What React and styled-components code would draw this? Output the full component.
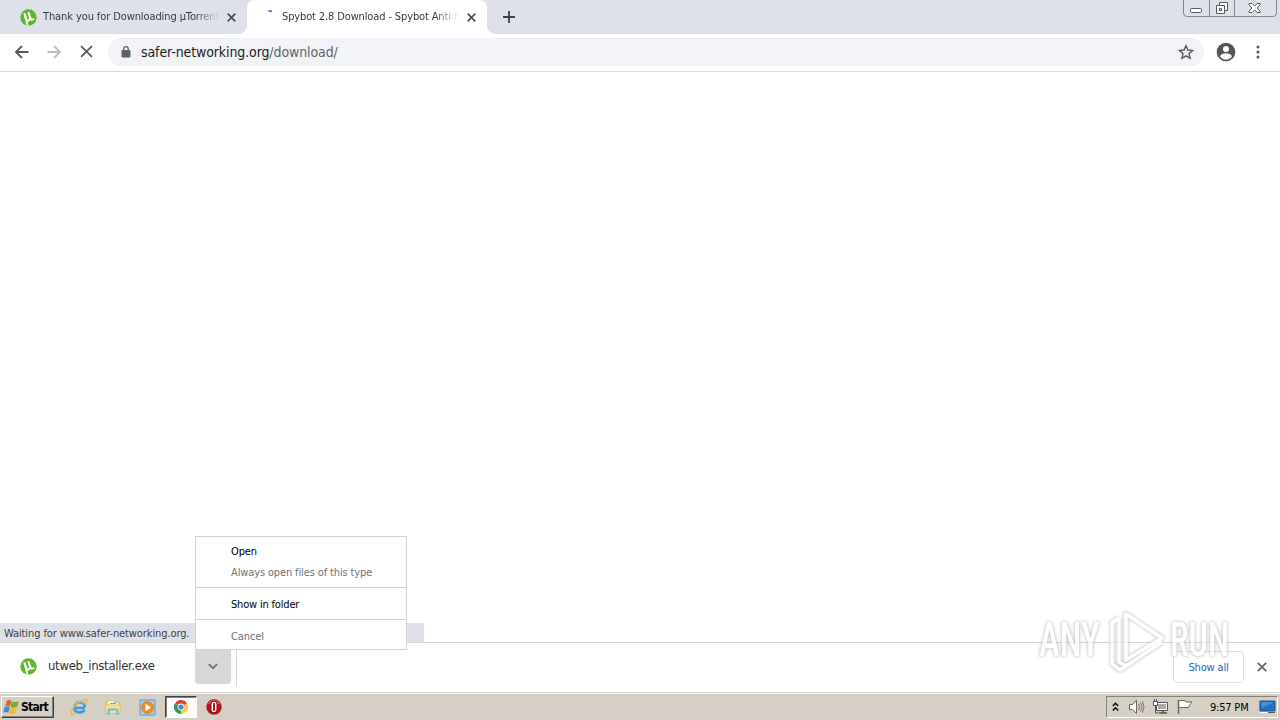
import React from 'react';
import styled, { createGlobalStyle, css } from 'styled-components';

const Global = createGlobalStyle`
  * { box-sizing: border-box; }
  html, body { margin: 0; padding: 0; overflow: hidden; }
  body { font-family: "DejaVu Sans Condensed", "DejaVu Sans", sans-serif; font-stretch: condensed; font-size: 11px; color: #202124; }
  svg { display: block; flex: none; }
`;

const Screen = styled.div`
  position: relative;
  width: 1280px;
  height: 720px;
  display: flex;
  flex-direction: column;
  overflow: hidden;
  background: #fff;
`;

const Label = styled.span`
  display: block;
  white-space: pre;
  font-size: ${(p) => p.$size || 11}px;
  letter-spacing: ${(p) => p.$track || 0}px;
  color: ${(p) => p.$color || 'inherit'};
  font-weight: ${(p) => (p.$bold ? 700 : 400)};
`;

const TabStrip = styled.header`
  height: 34px;
  flex: none;
  display: flex;
  background: #dee1e8;
`;

const Tab = styled.div`
  position: relative;
  width: ${(p) => p.$width}px;
  height: 34px;
  display: flex;
  align-items: center;
  padding-left: ${(p) => (p.$active ? 15 : 20)}px;
  ${(p) =>
    p.$active &&
    css`
      background: #fff;
      border-radius: 8px 8px 0 0;
      &::before, &::after {
        content: '';
        position: absolute;
        bottom: 0;
        width: 8px;
        height: 8px;
      }
      &::before { left: -8px; background: radial-gradient(circle at 0 0, transparent 7.5px, #fff 8px); }
      &::after { right: -8px; background: radial-gradient(circle at 100% 0, transparent 7.5px, #fff 8px); }
    `}
`;

const TabTitle = styled.div`
  width: ${(p) => p.$width}px;
  margin: 0 8px 0 ${(p) => p.$gap}px;
  overflow: hidden;
  line-height: 16px;
  mask-image: linear-gradient(to right, #000 calc(100% - 24px), transparent);
`;

const NewTab = styled.div`
  width: 44px;
  display: flex;
  align-items: center;
  justify-content: center;
`;

const WindowControls = styled.div`
  margin: -1px 3px 0 auto;
  width: 94px;
  height: 18px;
  display: flex;
  border: 1px solid #858890;
  border-radius: 0 0 4px 4px;
`;

const WindowButton = styled.div`
  width: ${(p) => p.$width}px;
  display: flex;
  align-items: center;
  justify-content: center;
  padding-right: 2px;
  & + & { border-left: 1px solid #858890; }
`;

const Toolbar = styled.div`
  height: 38px;
  flex: none;
  display: flex;
  align-items: center;
  padding: 0 6px 2px;
  border-bottom: 1px solid #d8dadd;
`;

const ToolButton = styled.div`
  width: 32px;
  display: flex;
  justify-content: center;
`;

const AddressBar = styled.div`
  width: 1096px;
  height: 28px;
  margin: 0 6px;
  padding: 0 10px 0 12px;
  display: flex;
  align-items: center;
  border-radius: 14px;
  background: #f1f3f6;
`;

const Url = styled.div`
  display: flex;
  margin: 0 auto 0 9px;
  line-height: 20px;
`;

const Viewport = styled.main`
  flex: 1;
  display: flex;
  align-items: flex-end;
`;

const StatusBubble = styled.div`
  width: 424px;
  height: 19px;
  padding-left: 4px;
  line-height: 21px;
  background: #dee1e8;
`;

const Shelf = styled.section`
  height: 50px;
  flex: none;
  display: flex;
  align-items: center;
  border-top: 1px solid #d3d5d8;
`;

const Download = styled.div`
  width: 237px;
  height: 43px;
  margin-bottom: 6px;
  display: flex;
  align-items: center;
  padding: 4px 5px 0 20px;
  border-right: 1px solid #d3d5d8;
`;

const FileName = styled.div`
  margin: -2px auto 0 11px;
  line-height: 18px;
`;

const DropButton = styled.div`
  width: 36px;
  height: 35px;
  display: flex;
  align-items: center;
  justify-content: center;
  border-radius: 0 0 3px 3px;
  background: #d8d8d8;
`;

const ShowAll = styled.div`
  width: 71px;
  height: 32px;
  margin: 0 13px 1px auto;
  display: flex;
  align-items: center;
  justify-content: center;
  border: 1px solid #dadce0;
  border-radius: 4px;
`;

const ShelfClose = styled.div`
  width: 23px;
  padding-bottom: 2px;
`;

const Menu = styled.div`
  position: absolute;
  left: 195px;
  top: 536px;
  width: 212px;
  height: 114px;
  border: 1px solid #d3d3d5;
  background: #fff;
`;

const MenuGroup = styled.div`
  height: ${(p) => p.$height}px;
  padding: ${(p) => p.$top}px 0 0 35px;
  & + & { border-top: 1px solid #d3d3d5; }
`;

const MenuItem = styled.div`
  height: 21px;
  line-height: 21px;
`;

const Watermark = styled.div`
  position: absolute;
  left: 1039px;
  top: 606px;
  width: 200px;
  height: 70px;
  display: flex;
  align-items: center;
  opacity: 0.8;
`;

const WatermarkWord = styled.div`
  width: 67px;
  height: 56px;
  line-height: 54px;
  font-family: Roboto, "Liberation Sans", sans-serif;
  font-size: 49px;
  font-weight: 500;
  color: #fff;
  transform: scaleX(${(p) => p.$squeeze});
  transform-origin: 0 50%;
  text-shadow: 0 0 3px #b4b4b4, 0 0 5px #c0c0c0;
  & > span { display: block; white-space: nowrap; }
`;

const Taskbar = styled.footer`
  height: 28px;
  flex: none;
  display: flex;
  align-items: center;
  padding: 2px 2px 0 1px;
  background: #d6cfc6;
  box-shadow: inset 0 1px #d4d0c8, inset 0 2px #fff;
`;

const Start = styled.div`
  width: 53px;
  height: 22px;
  display: flex;
  align-items: center;
  gap: 1px;
  padding-left: 1px;
  border: 1px solid;
  border-color: #fff #404040 #404040 #fff;
  box-shadow: inset -1px -1px #858078;
  color: #000;
`;

const TaskItem = styled.div`
  width: ${(p) => (p.$pressed ? 32 : 34)}px;
  height: 22px;
  margin-left: ${(p) => p.$gap || 0}px;
  display: flex;
  align-items: center;
  justify-content: center;
  ${(p) =>
    p.$pressed &&
    css`
      background: #fff;
      border: 1px solid;
      border-color: #404040 #fff #fff #404040;
      box-shadow: inset 1px 1px #858078;
    `}
`;

const Tray = styled.div`
  width: 172px;
  height: 22px;
  margin-left: auto;
  display: flex;
  align-items: center;
  padding-left: 5px;
  border: 1px solid;
  border-color: #858078 #fff #fff #858078;
  color: #000;
`;

const TrayIcon = styled.div`
  width: ${(p) => p.$width}px;
  display: flex;
  justify-content: center;
`;

const Clock = styled.div`
  width: 57px;
  padding-left: 8px;
`;

const Torrent = () => (
  <svg width="17" height="17" viewBox="0 0 17 17">
    <circle cx="8.5" cy="8.5" r="8.2" fill="#5fb52b" />
    <path d="M3.300 4.600L5.300 3.900L7.200 9.500C7.700 11 9.600 10.500 9.100 8.900L7.300 3.400L9.400 2.900L11.500 9.200C11.900 10.200 13 9.900 14 9.100L14.500 10.600C13 12 11.400 12 10.500 11.100C9.900 12.600 8.400 13 7.300 12.500L8.500 16.500L6.600 16.200z" fill="#fff" />
  </svg>
);

const Cross = ({ size = 9, width = 1.9, color = '#494c50' }) => (
  <svg width={size} height={size} viewBox="0 0 10 10">
    <path d="M.8.8l8.4 8.4M9.2.8L.8 9.2" stroke={color} strokeWidth={width} />
  </svg>
);

const Arrow = ({ color, flip }) => (
  <svg width="16" height="16" viewBox="0 0 16 16">
    <path d={flip ? 'M1.5 8h12M8 2L14 8 8 14' : 'M14.500 8H2.500M8 2L2 8 8 14'} fill="none" stroke={color} strokeWidth="1.800" />
  </svg>
);

const WindowsFlag = () => (
  <svg width="17" height="16" viewBox="0 0 17 16">
    <path d="M3.800 1.700C5.500.6 7 .8 8.400 1.800L6.900 7.500C5.300 6.500 3.600 6.600 2 7.500z" fill="#e6622b" />
    <path d="M8.900 2.200C11 3.500 13.500 3.300 16 1.700L14.300 7.600C12 9 9.500 8.900 7.400 7.700z" fill="#75af3a" />
    <path d="M1.800 8.100C3.400 7.200 5.200 7.200 6.800 8.100L5.300 13.700C3.700 12.600 1.900 12.700.1 13.700z" fill="#4485cf" />
    <path d="M7.300 8.400C9.400 9.600 11.800 9.600 14.100 8.300L12.500 14C10.300 15.400 8 15.300 5.800 14.100z" fill="#f5bd29" />
  </svg>
);

const Explorer = () => (
  <svg width="18" height="18" viewBox="0 0 18 18">
    <path d="M15 10H4.500c.1 5.400 7.800 5.700 10 1.900M4.600 9c.3-6.200 10-6.200 10.400 0" fill="none" stroke="#3a9bdc" strokeWidth="2.700" />
    <path d="M4 8.500c.8-5 8-6.500 10.500-2" fill="none" stroke="#86cff3" strokeWidth="1" />
    <path d="M4.500 16.200C1 17.700.2 15 3 10.500C6.200 5.500 12 1.500 15.700 1.400c1.800 0 1.600 2.200.3 4" fill="none" stroke="#e3b637" strokeWidth="1.300" />
  </svg>
);

const Folder = () => (
  <svg width="18" height="17" viewBox="0 0 18 17">
    <path d="M1 3l1-1.500h5l1 1.500h8v10H1z" fill="#e6c75c" />
    <path d="M4 2.500h10v5H4z" fill="#fffbe1" />
    <path d="M10 3h4M6 4.500h6" stroke="#59a8d4" strokeWidth="1.200" />
    <path d="M1 6h15.500l-.5 8.500H1.500z" fill="#f5e093" stroke="#d8b64c" strokeWidth=".7" />
    <path d="M4.500 16v-4q0-1.500 1.500-1.500h6q1.500 0 1.500 1.500V16" fill="none" stroke="#6bbce2" strokeWidth="2.200" />
  </svg>
);

const Player = () => (
  <svg width="17" height="17" viewBox="0 0 17 17">
    <path d="M1 1h15v15H1z" fill="#a9cde7" stroke="#5b9bcb" />
    <circle cx="8.500" cy="8.500" r="6" fill="#f28b20" stroke="#d17114" strokeWidth=".6" />
    <path d="M6.500 4.800l5.500 3.700-5.500 3.700z" fill="#fff" />
  </svg>
);

const Chrome = () => (
  <svg width="14" height="14" viewBox="0 0 14 14">
    <path d="M7 7L.9 3.500A7 7 0 0 1 13.100 3.500z" fill="#df4334" />
    <path d="M7 7L13.100 3.500A7 7 0 0 1 7 14z" fill="#f9cb3d" />
    <path d="M7 7v7A7 7 0 0 1 .9 3.500z" fill="#299c54" />
    <circle cx="7" cy="7" r="3.400" fill="#fff" />
    <circle cx="7" cy="7" r="2.600" fill="#4285e4" />
  </svg>
);

const Opera = () => (
  <svg width="16" height="16" viewBox="0 0 16 16">
    <circle cx="8" cy="8" r="7.700" fill="#b5141a" />
    <path d="M1.700 5a7 6.500 0 0 1 12.600 0z" fill="#d65256" />
    <rect x="4.600" y="2" width="6.800" height="12" rx="3.400" fill="#8e090e" />
    <rect x="5.500" y="2.800" width="5" height="10.400" rx="2.400" fill="#fff" />
    <rect x="7" y="4" width="2" height="8" rx="1" fill="#a31a1f" />
  </svg>
);

const Triangle = () => (
  <svg width="64" height="70" viewBox="0 0 64 70">
    <defs>
      <filter id="halo" x="-20%" y="-20%" width="140%" height="140%">
        <feGaussianBlur stdDeviation="1.300" />
      </filter>
    </defs>
    <g fill="none" strokeLinejoin="round">
      <path d="M20 8L56 32L20 54zM13 12L6 17V58L14 64L56 36M13 12V56L20 60" stroke="#cfcfcf" strokeWidth="6" filter="url(#halo)" />
      <path d="M20 8L56 32L20 54zM13 12L6 17V58L14 64L56 36M13 12V56L20 60" stroke="#fff" strokeWidth="3.400" />
    </g>
  </svg>
);

export default function App() {
  return (
    <Screen>
      <Global />
      <TabStrip>
        <Tab $width={247}>
          <Torrent />
          <TabTitle $width={176} $gap={6}>
            <Label $track={-0.1} $color="#36393c">Thank you for Downloading µTorrent</Label>
          </TabTitle>
          <Cross />
        </Tab>
        <Tab $width={240} $active>
          <svg width="16" height="16" viewBox="0 0 16 16">
            <path d="M6.500 2q2-.4 3.500.8" fill="none" stroke="#397fd0" strokeWidth="1.800" />
          </svg>
          <TabTitle $width={177} $gap={4}>
            <Label $track={-0.13} $color="#36393c">Spybot 2.8 Download - Spybot Anti-M</Label>
          </TabTitle>
          <Cross />
        </Tab>
        <NewTab>
          <svg width="12" height="12" viewBox="0 0 12 12">
            <path d="M6 0v12M0 6h12" stroke="#3c4043" strokeWidth="1.800" />
          </svg>
        </NewTab>
        <WindowControls>
          <WindowButton $width={25}>
            <svg width="12" height="12" viewBox="0 0 12 12">
              <rect x=".5" y="6.500" width="11" height="4" rx="1" fill="#fff" stroke="#555961" />
            </svg>
          </WindowButton>
          <WindowButton $width={25}>
            <svg width="13" height="14" viewBox="0 0 13 14">
              <path d="M4.500 1.500h8v8h-8z" fill="#fff" stroke="#555961" />
              <path d="M1.500 4.500h8v8h-8z" fill="#fff" stroke="#555961" />
              <path d="M4.500 7.500h2v2h-2z" fill="#fff" stroke="#555961" />
            </svg>
          </WindowButton>
          <WindowButton $width={42}>
            <svg width="13" height="12" viewBox="0 0 13 12">
              <path d="M1 1.500h3L6.500 4 9 1.500h3V3L9 6l3 3v1.500H9L6.500 8 4 10.500H1V9l3-3-3-3z" fill="#fff" stroke="#555961" />
            </svg>
          </WindowButton>
        </WindowControls>
      </TabStrip>

      <Toolbar>
        <ToolButton><Arrow color="#55585c" /></ToolButton>
        <ToolButton><Arrow color="#b9bbbe" flip /></ToolButton>
        <ToolButton><Cross size={13} width={1.3} color="#55585c" /></ToolButton>
        <AddressBar>
          <svg width="12" height="14" viewBox="0 0 12 14">
            <path d="M2 5.500h8V12H2z" fill="#5f6368" stroke="#5f6368" strokeLinejoin="round" />
            <path d="M3.700 6V4a2.300 2.300 0 0 1 4.600 0v2" fill="none" stroke="#5f6368" strokeWidth="1.300" />
          </svg>
          <Url>
            <Label $size={14} $track={-0.11} $color="#202124">safer-networking.org</Label>
            <Label $size={14} $track={-0.11} $color="#5f6368">/download/</Label>
          </Url>
          <svg width="16" height="16" viewBox="0 0 24 24">
            <path d="M12 2.500l2.800 6.600 7.200.6-5.500 4.700 1.700 7-6.200-3.700-6.200 3.700 1.700-7L2 9.700l7.200-.6z" fill="none" stroke="#55585c" strokeWidth="2.100" />
          </svg>
        </AddressBar>
        <ToolButton>
          <svg width="20" height="20" viewBox="0 0 20 20">
            <circle cx="10" cy="10" r="9.300" fill="#53565a" />
            <circle cx="10" cy="7" r="3" fill="#fff" />
            <path d="M4 14.200c1.500-4 10.500-4 12 0a7 7 0 0 1-12 0" fill="#fff" />
          </svg>
        </ToolButton>
        <ToolButton>
          <svg width="4" height="14" viewBox="0 0 4 14" fill="#55585c">
            <circle cx="2" cy="2" r="1.500" />
            <circle cx="2" cy="7" r="1.500" />
            <circle cx="2" cy="12" r="1.500" />
          </svg>
        </ToolButton>
      </Toolbar>

      <Viewport>
        <StatusBubble>
          <Label $track={-0.1} $color="#3d4045">Waiting for www.safer-networking.org.</Label>
        </StatusBubble>
      </Viewport>

      <Shelf>
        <Download>
          <Torrent />
          <FileName><Label $size={13} $track={-0.3} $color="#303336">utweb_installer.exe</Label></FileName>
          <DropButton>
            <svg width="10" height="7" viewBox="0 0 10 7">
              <path d="M.8 1L5 5.200 9.200 1" fill="none" stroke="#686b6f" strokeWidth="1.700" />
            </svg>
          </DropButton>
        </Download>
        <ShowAll><Label $track={-0.15} $color="#1a66cc">Show all</Label></ShowAll>
        <ShelfClose><Cross size={10} width={1.8} color="#5f6368" /></ShelfClose>
      </Shelf>

      <Taskbar>
        <Start>
          <WindowsFlag />
          <Label $size={12} $bold $track={-0.75}>Start</Label>
        </Start>
        <TaskItem $gap={8}><Explorer /></TaskItem>
        <TaskItem><Folder /></TaskItem>
        <TaskItem><Player /></TaskItem>
        <TaskItem $gap={1} $pressed><Chrome /></TaskItem>
        <TaskItem><Opera /></TaskItem>
        <Tray>
          <TrayIcon $width={7}>
            <svg width="7" height="10" viewBox="0 0 7 10">
              <path d="M.8 4L3.500 1.300 6.200 4M.8 8.500l2.700-2.700 2.700 2.700" fill="none" stroke="#000" strokeWidth="1.400" />
            </svg>
          </TrayIcon>
          <TrayIcon $width={35}>
            <svg width="17" height="16" viewBox="0 0 17 16">
              <path d="M1.500 5.500h3L8.500 1.500v13l-4-4h-3z" fill="#fff" stroke="#6b6761" />
              <path d="M10.500 5q2 3 0 6M12.500 3.500q3 4.500 0 9M14.500 2.500q3 5.500 0 11" fill="none" stroke="#77736d" />
            </svg>
          </TrayIcon>
          <TrayIcon $width={13}>
            <svg width="17" height="16" viewBox="0 0 17 16">
              <path d="M4.500 3.500h11v8h-11z" fill="#fff" stroke="#55524d" />
              <path d="M6 5h8v5H6z" fill="#aaa8a5" />
              <path d="M7 14h8M11 12v2" stroke="#55524d" strokeWidth="1.500" />
              <path d="M1.500 2.500h4v4h-4z" fill="#fff" stroke="#55524d" />
              <path d="M2.500 0v3M4.500 0v3M3.500 7v7h3" fill="none" stroke="#55524d" />
            </svg>
          </TrayIcon>
          <TrayIcon $width={35}>
            <svg width="16" height="16" viewBox="0 0 16 16">
              <path d="M1.500 1.500h6.500l1 1.500h6l-2.500 3-1 2.500H9L8 8.500H1.500z" fill="#fff" stroke="#6b6761" />
              <path d="M1.500 1v14" stroke="#6b6761" strokeWidth="1.500" />
            </svg>
          </TrayIcon>
          <Clock><Label $track={-0.2}>9:57 PM</Label></Clock>
          <svg width="17" height="14" viewBox="0 0 17 14">
            <path d="M1 1h15v10H1z" fill="#286fc0" stroke="#214e85" />
            <path d="M2 2h13L3 8z" fill="#4791d9" />
            <path d="M1 12.500h8" stroke="#fff" />
            <path d="M9 12.500h7" stroke="#465c73" />
          </svg>
        </Tray>
      </Taskbar>

      <Menu>
        <MenuGroup $height={50} $top={4}>
          <MenuItem><Label $track={-0.1} $color="#000">Open</Label></MenuItem>
          <MenuItem><Label $track={-0.13} $color="#707174">Always open files of this type</Label></MenuItem>
        </MenuGroup>
        <MenuGroup $height={32} $top={6}>
          <MenuItem><Label $track={-0.18} $color="#000">Show in folder</Label></MenuItem>
        </MenuGroup>
        <MenuGroup $height={30} $top={6}>
          <MenuItem><Label $track={-0.1} $color="#707174">Cancel</Label></MenuItem>
        </MenuGroup>
      </Menu>

      <Watermark>
        <WatermarkWord $squeeze={0.72}><span>ANY</span></WatermarkWord>
        <Triangle />
        <WatermarkWord $squeeze={0.7}><span>RUN</span></WatermarkWord>
      </Watermark>
    </Screen>
  );
}
